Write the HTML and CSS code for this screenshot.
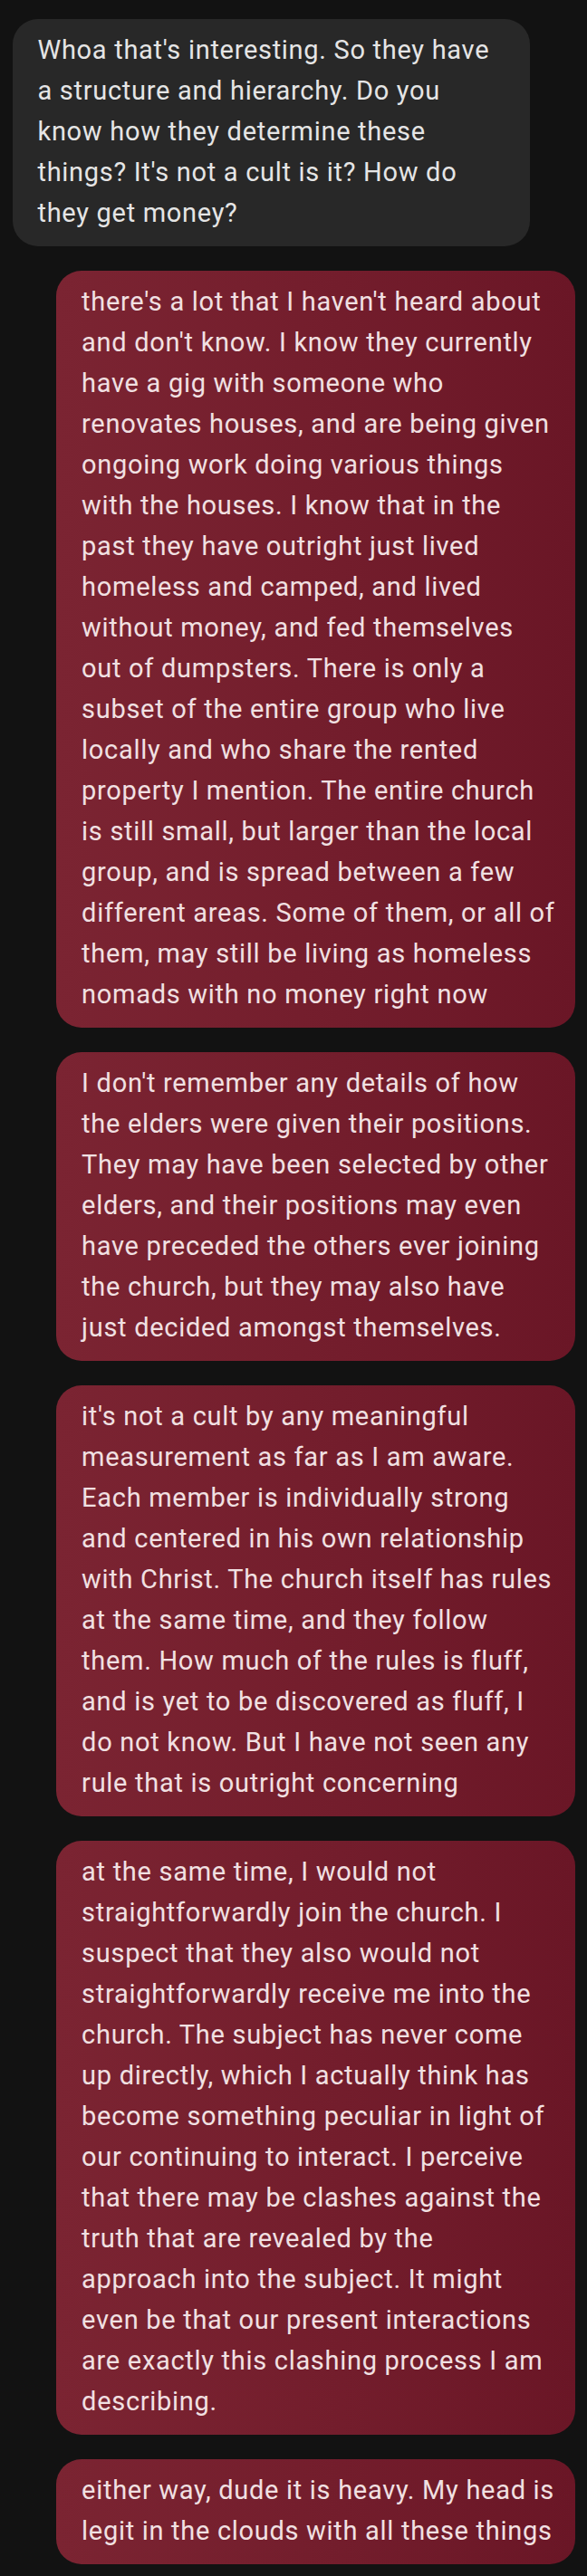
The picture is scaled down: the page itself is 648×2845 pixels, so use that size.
FILE: index.html
```html
<!DOCTYPE html>
<html lang="en">
<head>
<meta charset="utf-8">
<title>Conversation</title>
<link rel="stylesheet" href="styles.css">
</head>
<body>
<main class="thread">
  <div class="msg msg-in">
    <p class="bubble bubble-in">Whoa that's interesting. So they have a structure and hierarchy. Do you know how they determine these things? It's not a cult is it? How do they get money?</p>
  </div>
  <div class="msg msg-out">
    <p class="bubble bubble-out">there's a lot that I haven't heard about and don't know. I know they currently have a gig with someone who renovates houses, and are being given ongoing work doing various things with the houses. I know that in the past they have outright just lived homeless and camped, and lived without money, and fed themselves out of dumpsters. There is only a subset of the entire group who live locally and who share the rented property I mention. The entire church is still small, but larger than the local group, and is spread between a few different areas. Some of them, or all of them, may still be living as homeless nomads with no money right now</p>
  </div>
  <div class="msg msg-out">
    <p class="bubble bubble-out">I don't remember any details of how the elders were given their positions. They may have been selected by other elders, and their positions may even have preceded the others ever joining the church, but they may also have just decided amongst themselves.</p>
  </div>
  <div class="msg msg-out">
    <p class="bubble bubble-out">it's not a cult by any meaningful measurement as far as I am aware. Each member is individually strong and centered in his own relationship with Christ. The church itself has rules at the same time, and they follow them. How much of the rules is fluff, and is yet to be discovered as fluff, I do not know. But I have not seen any rule that is outright concerning</p>
  </div>
  <div class="msg msg-out">
    <p class="bubble bubble-out">at the same time, I would not straightforwardly join the church. I suspect that they also would not straightforwardly receive me into the church. The subject has never come up directly, which I actually think has become something peculiar in light of our continuing to interact. I perceive that there may be clashes against the truth that are revealed by the approach into the subject. It might even be that our present interactions are exactly this clashing process I am describing.</p>
  </div>
  <div class="msg msg-out">
    <p class="bubble bubble-out">either way, dude it is heavy. My head is legit in the clouds with all these things</p>
  </div>
</main>
</body>
</html>
```

FILE: styles.css
```css
html, body {
  margin: 0;
  padding: 0;
  background: #121212;
}

body {
  font-family: Roboto, "Noto Sans", "Liberation Sans", sans-serif;
  font-size: 29px;
  line-height: 45px;
  letter-spacing: 0.7px;
}

.thread {
  display: flex;
  flex-direction: column;
  gap: 27px;
  padding: 21px 13px 13px 13.5px;
}

.msg {
  display: flex;
}

.msg-in {
  justify-content: flex-start;
}

.msg-out {
  justify-content: flex-end;
}

.bubble {
  margin: 0;
  box-sizing: content-box;
  padding-top: 12px;
  padding-bottom: 14px;
  border-radius: 28px;
}

.bubble-in {
  width: 515px;
  padding-left: 28px;
  padding-right: 28px;
  background: #282828;
  color: #e5e5e5;
}

.bubble-out {
  width: 522.9px;
  padding-left: 28px;
  padding-right: 22px;
  background: linear-gradient(90deg, #7b2432 0%, #731d2c 55%, #6a1626 100%);
  color: #f1e0e2;
}
```
